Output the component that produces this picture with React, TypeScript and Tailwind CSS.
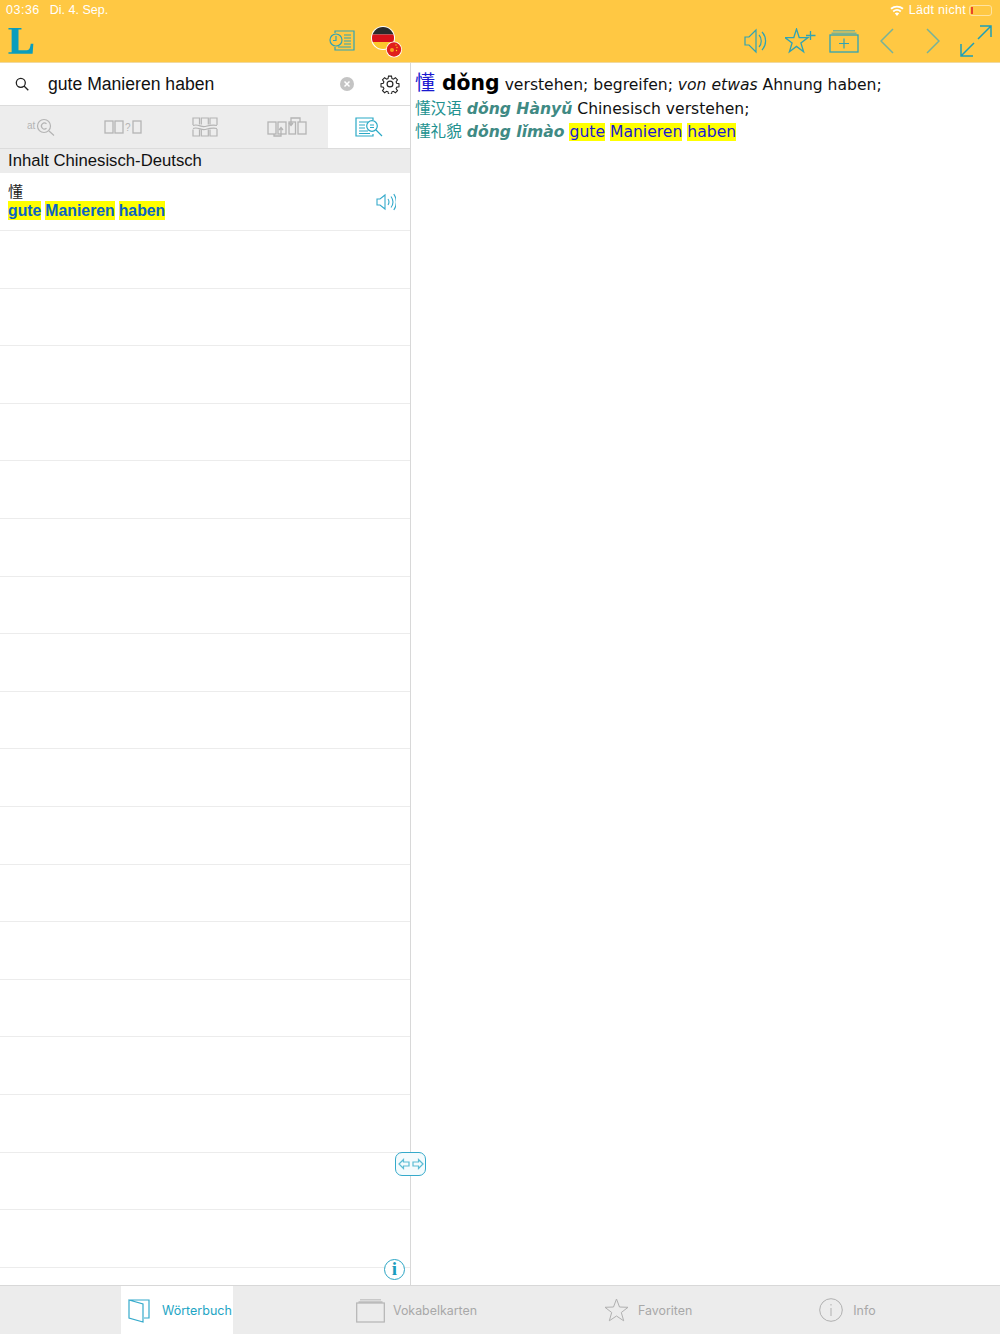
import React from 'react';

const sans = { fontFamily: '"Liberation Sans", "Noto Sans CJK SC", sans-serif' };

function HistoryIcon() {
  return (
    <svg width="26" height="22" viewBox="0 0 26 22" fill="none" stroke="#2fa3b5" strokeWidth="1.2">
      <path d="M6 3V1h19v19H6v-3" />
      <circle cx="7" cy="10" r="6" />
      <path d="M7 6v4.500H4M15 5h7M15 8h7M15 11h7M15 14h7M9 17h13" />
    </svg>
  );
}

function Flags() {
  return (
    <svg width="32" height="32" viewBox="0 0 32 32">
      <defs>
        <clipPath id="de">
          <circle cx="12" cy="12" r="11" />
        </clipPath>
      </defs>
      <circle cx="12" cy="12" r="12" fill="#fff" />
      <g clipPath="url(#de)">
        <rect x="0" y="0" width="24" height="8.500" fill="#2a2a2a" />
        <rect x="0" y="8.500" width="24" height="7.500" fill="#d8121a" />
        <rect x="0" y="16" width="24" height="8" fill="#fcc72c" />
      </g>
      <circle cx="23" cy="23.500" r="8" fill="#fff" />
      <circle cx="23" cy="23.500" r="7.200" fill="#e0201b" />
      <circle cx="21" cy="24" r="2" fill="#f8a01c" />
      <circle cx="25" cy="19" r="0.700" fill="#f8d21c" />
      <circle cx="26" cy="21.500" r="0.700" fill="#f8d21c" />
      <circle cx="25.500" cy="24.500" r="0.700" fill="#f8d21c" />
    </svg>
  );
}

function Toolbar() {
  return (
    <div className="h-[42px] flex items-center relative">
      <div className="w-[410px] flex items-center shrink-0">
        <svg className="ml-[8px]" width="26" height="26" viewBox="0 0 27 28" fill="#0b9dbd">
          <path d="M0 0h14v1.500h-3.200V24H20c2.500 0 3.500-3 4-7h2.800l-.8 10.600H0v-1.500h3.400V1.500H0z" />
        </svg>
        <div className="ml-[295px]">
          <HistoryIcon />
        </div>
        <div className="ml-[16px] mt-[1px]">
          <Flags />
        </div>
      </div>
      <div className="ml-[334px] flex items-center">
        <svg width="24" height="26" viewBox="0 0 24 26" fill="none" stroke="#2fa3b5" strokeWidth="1.2">
          <path d="M1 9v8h4l7 7V2L5 9z" />
          <path d="M15 7c3 3 3 9 0 12M18 4c4.800 5 4.800 13 0 18" />
        </svg>
        <svg className="ml-[17px]" width="31" height="26" viewBox="0 0 31 26" fill="none" stroke="#2fa3b5" strokeWidth="1.3">
          <path d="M11.500 1l2.700 8.500 8.800.1-7.100 5.400 2.700 8.700-7.100-5.300-7.100 5.300 2.700-8.700L0 9.600l8.800-.1z" />
          <path d="M25.500 3v9M21 7.500h9.500" />
        </svg>
        <svg className="ml-[13px]" width="30" height="26" viewBox="0 0 30 26" fill="none">
          <path d="M4 3.500V2h22v1.500zM2.500 6V4.500h25V6z" fill="#7fb28f" />
          <rect x="1" y="7" width="28" height="17" stroke="#2fa3b5" strokeWidth="1.300" />
          <path d="M15 10.500v10M10 15.500h10" stroke="#2fa3b5" strokeWidth="1.200" />
        </svg>
        <svg className="ml-[21px]" width="14" height="26" viewBox="0 0 14 26" fill="none" stroke="#76b29a" strokeWidth="1.500">
          <path d="M13 1L1 13l12 12" />
        </svg>
        <svg className="ml-[32px]" width="14" height="26" viewBox="0 0 14 26" fill="none" stroke="#76b29a" strokeWidth="1.500">
          <path d="M1 1l12 12L1 25" />
        </svg>
        <svg className="ml-[20px]" width="32" height="32" viewBox="0 0 32 32" fill="none" stroke="#1c9fb8" strokeWidth="1.500">
          <path d="M20 1h11v11M31 1L18 14M1 19v12h12M1 31l13-13" />
        </svg>
      </div>
    </div>
  );
}

function StatusBar() {
  return (
    <div className="h-[20px] flex items-center justify-between text-white text-[12.500px]" style={sans}>
      <div className="pl-[6px] flex gap-[10px]">
        <span className="tracking-[0.500px]">03:36</span>
        <span>Di. 4. Sep.</span>
      </div>
      <div className="flex items-center">
        <svg width="14" height="11" viewBox="0 0 14 11" fill="#fff">
          <path d="M7 11L4.800 8.300a3.500 3.500 0 014.400 0zM3.800 7.200L2.600 5.700a7 7 0 018.800 0l-1.200 1.500a5 5 0 00-6.400 0zM1.600 4.500L.4 3a10.500 10.500 0 0113.200 0l-1.200 1.500a8.600 8.600 0 00-10.800 0z" />
        </svg>
        <span className="ml-[5px] tracking-[0.300px]">Lädt nicht</span>
        <div className="ml-[3px] mr-[8px] w-[23px] h-[11px] rounded-[3px] border border-[#ffe3a0] flex items-center pl-[1px]">
          <div className="w-[2px] h-[7px] bg-[#e8452a]" />
        </div>
      </div>
    </div>
  );
}

function SearchBar() {
  return (
    <div className="h-[42px] flex items-center bg-white">
      <svg className="ml-[15px]" width="14" height="14" viewBox="0 0 14 14" fill="none" stroke="#222" strokeWidth="1.300">
        <circle cx="5.800" cy="5.800" r="4.500" />
        <path d="M9 9l4.300 4.300" />
      </svg>
      <span className="ml-[19px] text-[17.600px] text-[#111] flex-1" style={sans}>gute Manieren haben</span>
      <svg width="14" height="14" viewBox="0 0 14 14">
        <circle cx="7" cy="7" r="7" fill="#c4c4c4" />
        <path d="M4.500 4.500l5 5M9.500 4.500l-5 5" stroke="#fff" strokeWidth="1.500" />
      </svg>
      <svg className="ml-[26px] mr-[10px]" width="20" height="20" viewBox="0 0 24 24" fill="none" stroke="#222" strokeWidth="1.400">
        <circle cx="12" cy="12" r="3.500" />
        <path d="M10 1.500h4l.6 3.200 1.900.8 2.700-1.900 2.800 2.800-1.900 2.700.8 1.900 3.100.6v4l-3.100.6-.8 1.900 1.900 2.700-2.800 2.800-2.700-1.900-1.900.8-.6 3.200h-4l-.6-3.200-1.900-.8-2.700 1.900-2.800-2.800 1.900-2.700-.8-1.900-3.100-.6v-4l3.100-.6.8-1.900-1.900-2.700 2.800-2.800 2.700 1.900 1.900-.8z" transform="translate(1.200 1.200) scale(.9)" />
      </svg>
    </div>
  );
}

function ModeTabs() {
  const gray = '#b4b4b4';
  return (
    <div className="h-[44px] flex bg-[#ededed] border-t border-b border-[#dcdcdc]">
      <div className="w-[82px] flex items-center justify-center">
        <svg width="28" height="18" viewBox="0 0 28 18" fill="none" stroke={gray} strokeWidth="1.200">
          <text x="0" y="11" fontSize="10" fill={gray} stroke="none" style={sans}>at</text>
          <circle cx="17" cy="8" r="6.500" />
          <path d="M19.500 5.800a3 3 0 100 4.400M22 13l5 4.500" />
        </svg>
      </div>
      <div className="w-[82px] flex items-center justify-center">
        <svg width="38" height="14" viewBox="0 0 38 14" fill="none" stroke={gray} strokeWidth="1.300">
          <rect x="1" y="1" width="8" height="12" />
          <rect x="11" y="1" width="8" height="12" />
          <rect x="29" y="1" width="8" height="12" />
          <text x="21" y="11" fontSize="10" fill={gray} stroke="none" style={sans}>?</text>
        </svg>
      </div>
      <div className="w-[82px] flex items-center justify-center">
        <svg width="26" height="20" viewBox="0 0 26 20" fill="none" stroke={gray} strokeWidth="1.200">
          <path d="M1 8V1h6.500v6.500M9.300 7.500V1h7v6.500M18 7.500V1h7v7M1 12.500V19h6.500v-6.500M9.300 12.500V19h7v-6.500M18 12.500V19h7v-7" />
          <path d="M1 8.500c5-2 8 2 12 1s7-2 12-1M1 11.500c5-2 8 2 12 1s7-2 12-1" />
        </svg>
      </div>
      <div className="w-[82px] flex items-center justify-center">
        <svg width="40" height="20" viewBox="0 0 40 20" fill="none" stroke={gray} strokeWidth="1.300">
          <rect x="1" y="5" width="8" height="12" />
          <rect x="11" y="5" width="8" height="12" />
          <rect x="22" y="5" width="6.500" height="12" />
          <rect x="31" y="5" width="8" height="12" />
          <path d="M7 17v2h7v-8M12 13l2-2.500 2 2.500M24 5V1h9v4M24 8l0-3M22 6l2 2.500 2-2.500" />
        </svg>
      </div>
      <div className="w-[82px] bg-white flex items-center justify-center">
        <svg width="28" height="20" viewBox="0 0 28 20" fill="none" stroke="#2aa9c6" strokeWidth="1.200">
          <path d="M18 3V1H1v18h17v-2" />
          <path d="M4 5h9M4 8h6M4 11h6M4 14h9M4 16.500h11" />
          <circle cx="17" cy="9" r="5.300" />
          <path d="M15 8h4M15 10.500h4M21 13l6 6" />
        </svg>
      </div>
    </div>
  );
}

function SpeakerSmall() {
  return (
    <svg width="20" height="18" viewBox="0 0 20 18" fill="none" stroke="#35aacb" strokeWidth="1.100">
      <path d="M1 6v6h3l5 4V2L4 6z" />
      <path d="M12 6c1.300 2 1.300 4 0 6M15 3.500c2.400 3.300 2.400 7.700 0 11M17.800 1c3.200 5 3.200 11 0 16" />
    </svg>
  );
}

function Mark({ children }: { children: React.ReactNode }) {
  return <span className="bg-[#ffff00]">{children}</span>;
}

function ResultList() {
  const empties = Array.from({ length: 19 }, (_, i) => i);
  return (
    <div className="flex-1 overflow-hidden">
      <div className="h-[24px] bg-[#ececec] pl-[8px] text-[16.700px] leading-[24px] text-[#111]" style={sans}>
        Inhalt Chinesisch-Deutsch
      </div>
      <div className="h-[58px] border-b border-[#ececec] flex items-center justify-between pl-[8px] pr-[14px]">
        <div style={sans}>
          <div className="text-[15px] leading-[18px] text-[#222]">懂</div>
          <div className="text-[15.800px] leading-[19px] font-bold text-[#0a63c4] flex gap-[4px]">
            <Mark>gute</Mark>
            <Mark>Manieren</Mark>
            <Mark>haben</Mark>
          </div>
        </div>
        <SpeakerSmall />
      </div>
      {empties.map((i) => (
        <div key={i} className="h-[57.600px] border-b border-[#ececec]" />
      ))}
    </div>
  );
}

function Entry() {
  const dejavu = { fontFamily: '"DejaVu Sans", "Noto Sans CJK SC", sans-serif' };
  const teal = 'text-[#22918f]';
  const pinyin = 'font-bold italic text-[#3f8a84]';
  return (
    <div className="flex-1 pl-[4px] pt-[7px] text-[15.600px] text-[#111]" style={dejavu}>
      <div className="h-[26px] leading-[26px] whitespace-nowrap">
        <span className="text-[20px] text-[#1a1ad0] mr-[2px]">懂</span>{' '}
        <span className="text-[20.400px] font-bold text-black">dǒng</span> verstehen; begreifen; <i>von etwas</i> Ahnung haben;
      </div>
      <div className="h-[23px] leading-[23px] mt-[2px] whitespace-nowrap">
        <span className={teal}>懂汉语</span> <span className={pinyin}>dǒng Hànyǔ</span> Chinesisch verstehen;
      </div>
      <div className="h-[23px] leading-[23px] whitespace-nowrap">
        <span className={teal}>懂礼貌</span> <span className={pinyin}>dǒng lǐmào</span>{' '}
        <span className="text-[#1a1ad0]">
          <Mark>gute</Mark> <Mark>Manieren</Mark> <Mark>haben</Mark>
        </span>
      </div>
    </div>
  );
}

function TabBar() {
  const label = 'text-[12.400px] text-[#a8a8a8] pt-[2px]';
  const inter = { fontFamily: 'Inter, sans-serif' };
  return (
    <div className="h-[49px] bg-[#ececec] border-t border-[#d8d8d8] flex items-center" style={inter}>
      <div className="ml-[121px] w-[112px] h-full bg-white flex items-center">
        <svg className="ml-[7px]" width="22" height="25" viewBox="0 0 22 25" fill="none" stroke="#35aacb" strokeWidth="1.200">
          <path d="M1 2l14 4v18L1 20zM1 2h20v18h-5" />
        </svg>
        <span className="ml-[12px] text-[12.500px] text-[#1ea5c4] pt-[2px]">Wörterbuch</span>
      </div>
      <svg className="ml-[123px]" width="29" height="25" viewBox="0 0 29 25" fill="none">
        <path d="M4 1h21v1.500H4zM2.500 3h24v2h-24z" fill="#c8c8c8" />
        <rect x="0.700" y="5" width="27.600" height="19" stroke="#b4b4b4" strokeWidth="1.200" />
      </svg>
      <span className={`ml-[8px] ${label}`}>Vokabelkarten</span>
      <svg className="ml-[127px]" width="25" height="24" viewBox="0 0 25 24" fill="none" stroke="#b0b0b0" strokeWidth="1">
        <path d="M12.500 1l3 8 8.500.3-6.700 5.200 2.400 8.300-7.200-4.800-7.200 4.800 2.400-8.300L1 9.300 9.500 9z" />
      </svg>
      <span className={`ml-[9px] ${label}`}>Favoriten</span>
      <svg className="ml-[127px]" width="24" height="24" viewBox="0 0 24 24" fill="none" stroke="#b0b0b0" strokeWidth="1">
        <circle cx="12" cy="12" r="11.300" />
        <path d="M12 10v8M12 6v1.500" />
      </svg>
      <span className={`ml-[10px] ${label}`}>Info</span>
    </div>
  );
}

export default function App() {
  return (
    <div className="w-[1000px] h-[1334px] relative flex flex-col overflow-hidden bg-white">
      <div className="bg-[#ffc843] h-[63px] shrink-0 border-b border-[#f0d9a0]">
        <StatusBar />
        <Toolbar />
      </div>
      <div className="flex-1 flex min-h-0">
        <div className="w-[411px] shrink-0 flex flex-col border-r border-[#d8d8d8]">
          <SearchBar />
          <ModeTabs />
          <ResultList />
        </div>
        <Entry />
      </div>
      <TabBar />

      {/* Splitter griff und info knopf liegen ueber der liste */}
      <div className="absolute left-[395px] top-[1152px] w-[31px] h-[24px] rounded-[7px] border-[1.500px] border-[#35aacb] bg-[#f4fbfd] flex items-center justify-center">
        <svg width="26" height="12" viewBox="0 0 26 12" fill="none" stroke="#5cbcd4" strokeWidth="1.200">
          <path d="M1 6l4.500-4.500V4h5.500v4H5.500v2.500zM25 6l-4.500-4.500V4H15v4h5.500v2.500z" />
        </svg>
      </div>
      <div className="absolute left-[384px] top-[1259px] w-[21px] h-[21px] rounded-full border border-[#2aa5c4] bg-white flex items-center justify-center text-[#1b9cbd] text-[19px] font-bold" style={{ fontFamily: '"Liberation Serif", serif' }}>
        i
      </div>
    </div>
  );
}
